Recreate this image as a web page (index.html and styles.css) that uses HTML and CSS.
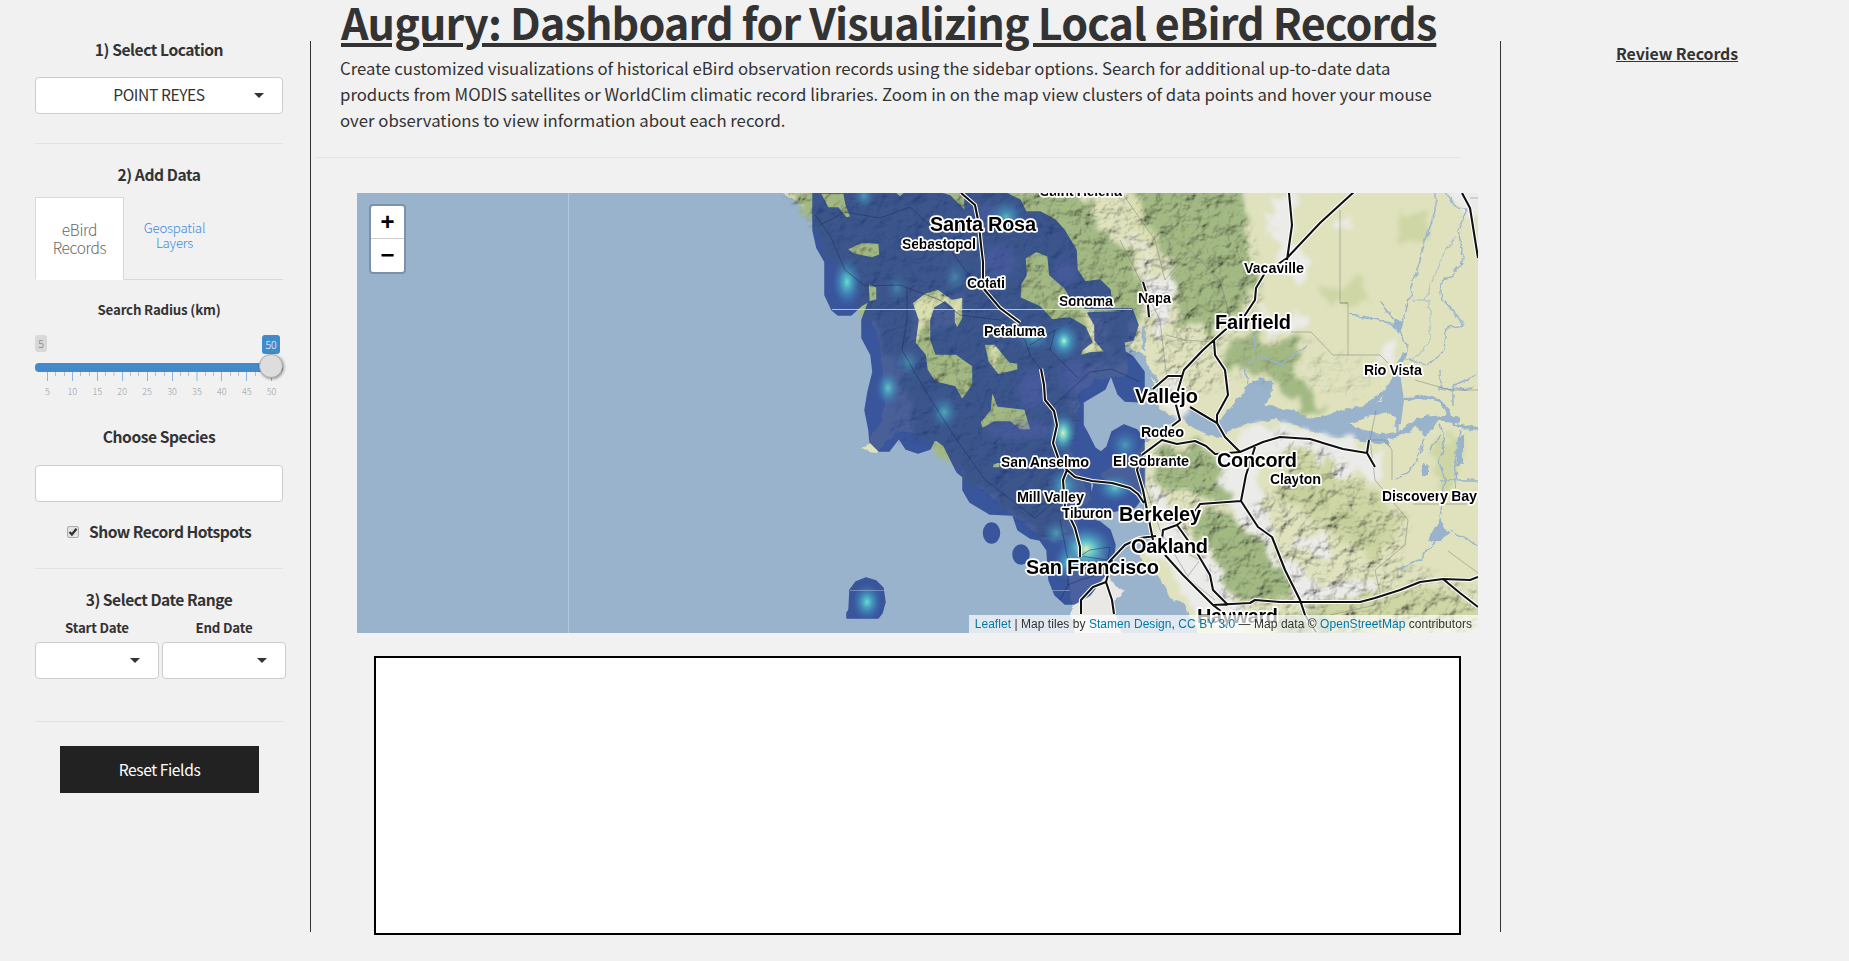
FILE: index.html
```html
<!DOCTYPE html>
<html lang="en">
<head>
<meta charset="utf-8">
<title>Augury</title>
<link rel="stylesheet" href="styles.css">
</head>
<body>
<div class="page">
  <aside class="sidebar">
    <h4 class="heading">1) Select Location</h4>
    <div class="select select-location"><span>POINT REYES</span><i class="caret"></i></div>
    <hr class="rule rule-location">
    <h4 class="heading heading-data">2) Add Data</h4>
    <div class="tabs">
      <div class="tab tab-active">eBird<br>Records</div>
      <div class="tab tab-link">Geospatial<br>Layers</div>
    </div>
    <h5 class="subheading">Search Radius (km)</h5>
    <div class="slider">
      <div class="slider-values"><span class="value-min">5</span><span class="value-current">50</span></div>
      <div class="slider-bar"><i class="knob"></i></div>
      <svg class="ticks" width="248" height="10" viewBox="0 0 248 10">
        <path class="tick-small" d="M20.5 0v4M29.5 0v4M45.5 0v4M54.5 0v4M70.5 0v4M79 0v4M95.5 0v4M103.500 0v4M120.500 0v4M129.500 0v4M145.500 0v4M153.500 0v4M170.500 0v4M178.500 0v4M195.500 0v4M203.500 0v4M220.500 0v4"/>
        <path class="tick-big" d="M12.500 0v9M37.500 0v9M62.500 0v9M87.500 0v9M112.500 0v9M137.500 0v9M162 0v9M186.500 0v9M211.500 0v9M236.500 0v9"/>
      </svg>
      <div class="tick-labels"><span>5</span><span>10</span><span>15</span><span>20</span><span>25</span><span>30</span><span>35</span><span>40</span><span>45</span><span>50</span></div>
    </div>
    <h4 class="heading heading-species">Choose Species</h4>
    <div class="select select-species"></div>
    <div class="check-row">
      <span class="checkbox"><svg width="10" height="10" viewBox="0 0 10 10"><path d="M1.500 5l2.400 2.500L8.500 1.700" fill="none" stroke="#333" stroke-width="2.300"/></svg></span>
      <span class="heading">Show Record Hotspots</span>
    </div>
    <hr class="rule rule-hotspots">
    <h4 class="heading heading-dates">3) Select Date Range</h4>
    <div class="dates">
      <div class="date"><h5 class="subheading">Start Date</h5><div class="select"><i class="caret"></i></div></div>
      <div class="date"><h5 class="subheading">End Date</h5><div class="select"><i class="caret"></i></div></div>
    </div>
    <hr class="rule rule-dates">
    <div class="button">Reset Fields</div>
  </aside>

  <main class="main">
    <h1 class="title">Augury: Dashboard for Visualizing Local eBird Records</h1>
    <p class="intro"><span>Create customized visualizations of historical eBird observation records using the sidebar options. Search for additional up-to-date data</span><span>products from MODIS satellites or WorldClim climatic record libraries. Zoom in on the map view clusters of data points and hover your mouse</span><span>over observations to view information about each record.</span></p>
    <hr class="rule rule-main">
    <div class="map">
      <svg class="map-canvas" width="1121" height="440" viewBox="357 193 1121 440">
        <defs>
          <filter id="soft" x="-20%" y="-20%" width="140%" height="140%"><feGaussianBlur stdDeviation="3.500"/></filter>
          <filter id="rough" x="-10%" y="-10%" width="120%" height="120%">
            <feTurbulence type="fractalNoise" baseFrequency=".045" numOctaves="4" seed="4" result="n"/>
            <feDisplacementMap in="SourceGraphic" in2="n" scale="34" xChannelSelector="R" yChannelSelector="G"/><feGaussianBlur stdDeviation="2"/>
          </filter>
          <filter id="edge" x="-5%" y="-5%" width="110%" height="110%">
            <feTurbulence type="fractalNoise" baseFrequency=".1" numOctaves="3" seed="9" result="n"/>
            <feDisplacementMap in="SourceGraphic" in2="n" scale="7" xChannelSelector="R" yChannelSelector="G"/>
          </filter>
          <filter id="relief" filterUnits="userSpaceOnUse" x="357" y="193" width="1121" height="440">
            <feTurbulence type="fractalNoise" baseFrequency=".06 .065" numOctaves="4" seed="7"/>
            <feColorMatrix values="0 0 0 0 0  0 0 0 0 0  0 0 0 0 0  1 0 0 0 0"/>
            <feDiffuseLighting surfaceScale="8" diffuseConstant="1.2" lighting-color="#fff"><feDistantLight azimuth="225" elevation="50"/></feDiffuseLighting>
          </filter>
          <radialGradient id="glow"><stop offset="0" stop-color="#65dcd2"/><stop offset=".35" stop-color="#49a9c6" stop-opacity=".8"/><stop offset="1" stop-color="#3b6eb4" stop-opacity="0"/></radialGradient>
          <radialGradient id="hot"><stop offset="0" stop-color="#d8efb5"/><stop offset=".3" stop-color="#66d0d0" stop-opacity=".9"/><stop offset="1" stop-color="#3b7cba" stop-opacity="0"/></radialGradient>
          <mask id="hillmask" maskUnits="userSpaceOnUse" x="357" y="193" width="1121" height="440">
            <path filter="url(#soft)" fill="#fff" d="M780 185L830 245L858 287L880 330L900 380L890 440L940 445L1000 505L1050 545L1075 530L1075 450L1085 385L1140 350L1140 310L1170 400L1225 385L1240 330L1260 300L1256 250L1235 185Z
              M1145 455L1190 442L1225 470L1215 500L1240 520L1290 470L1275 430L1330 450L1380 500L1410 520L1395 560L1478 590V640H1270L1220 600L1195 550L1150 500Z"/>
            <path filter="url(#soft)" fill="#555" d="M1210 380L1225 330L1310 340L1380 370L1360 400L1250 380Z"/>
          </mask>
        </defs>
        <rect x="357" y="193" width="1121" height="440" fill="#99b3cd"/>
        <path filter="url(#edge)" fill="#dfe2bd" d="M775 188L813 213L830 245L843 275L858 287L871 292L866 308L876 330L882 360L885 405L880 425L870 440L862 450L877 452L897 432L918 434L938 440L950 452L964 476L990 495L1020 520L1045 540L1072 540L1076 530L1082 505L1092 500L1082 480L1070 450L1076 420L1080 390L1100 378L1128 375L1124 345L1145 355L1152 380L1160 410L1170 416L1190 409L1208 417L1220 420L1246 387L1260 378L1273 382L1271 397L1262 403L1275 408L1293 410L1311 419L1342 410L1380 402L1391 388L1396 370L1405 350L1401 337L1490 337V640H1200L1185 605L1170 597L1158 575L1140 556L1152 545L1150 525L1144 505L1141 490L1110 487L1100 473L1135 455L1143 446L1165 428L1182 418L1200 432L1216 438L1245 423L1275 420L1298 426L1325 436L1355 440L1392 445L1380 433L1396 425L1438 418L1490 402V185Z"/>
        <path fill="#dfe2bd" d="M1380 185H1490V430H1400L1404 400L1398 360Z"/>
        <path filter="url(#edge)" fill="#dfe2bd" d="M1348 424L1385 412L1397 420L1385 436L1365 432Z"/>
        <path filter="url(#edge)" fill="#e9e8e4" d="M1068 555L1074 640H1125L1112 603L1124 591L1111 582L1108 560L1095 548Z"/>
        <g filter="url(#rough)" fill="#a3b984">
          <path d="M785 185L850 290L900 380L925 440L1040 540L1070 520L1075 385L1130 345L1112 280L1070 220L1040 185Z"/>
          <path d="M1025 180L1080 190L1110 235L1135 270L1150 300L1138 330L1100 300L1070 250L1030 210Z"/>
          <path d="M1130 180L1240 185L1256 275L1240 312L1210 335L1180 320L1176 290L1155 240Z"/>
          <path d="M1232 345L1250 335L1290 350L1302 335L1310 360L1295 380L1322 405L1300 408L1270 370L1228 370Z"/>
          <path d="M1155 455L1200 440L1240 480L1230 497L1185 500L1165 485Z"/>
          <path d="M1190 520L1220 512L1255 535L1280 560L1295 600L1245 600L1217 570Z"/>
          <path d="M1260 430L1282 428L1280 443Z"/>
          <path d="M1270 615L1320 612L1370 640H1280Z"/>
          <path d="M1340 510L1370 520L1385 550L1350 540Z" opacity=".65"/>
          <path d="M1285 470L1330 480L1320 515L1290 500Z" opacity=".5"/>
        </g>
        <g filter="url(#rough)" fill="#c9d39e" opacity=".75">
          <path d="M1290 450L1350 470L1400 520L1380 560L1340 540L1280 500Z"/><path d="M1400 210l30 5l-10 25l-25 5z"/><path d="M1320 290l40-10l10 20l-35 10z"/><path d="M1320 600L1440 590L1478 605V633H1330Z"/><path d="M1440 440l20 0l-5 60l-20-10z"/>
        </g>
        <g filter="url(#rough)" fill="#d9dfae">
          <path d="M915 300l45-6l4 25l-34 5l-8 30l-10-10z"/><path d="M1075 310l25 5l12 40l-25-5z"/><path d="M1110 190l25 0l25 50l-10 10z" opacity=".6"/><path d="M985 345l15 4l-6 18z"/>
        </g>
        <g filter="url(#rough)" fill="#ebebe9">
          <path d="M1270 195l20 0l5 45l18 15l-15 30l-20-20l-12-35z"/><path d="M1147 275l22-5l5 20l-10 50l-12-5z"/><path d="M1255 310l50 5l-5 20l-40-5z"/><path d="M1165 375l25 5l4 30l-22 8l-18-28z"/><path d="M1240 430l40-5l70 15l35 12v25l-30-5l-65-22l-25 5l-5 45l20 35l-25 5l-30-40l-5-35z"/><path d="M1140 455l10 20l20 30l20 35l30 30l25 45l-15 30l-35-35l-30-45l-20-10l15-30z"/><path d="M1250 535l30 30l20 35l70-5l-3-15l-45 5l-30-15l-25-35z"/><path d="M1335 212h12v18h-10z"/><path d="M1447 188h35v18l-25 3z"/><path d="M1295 535l30 5l5 15l-30-5z"/><path d="M1132 225l10 20l12 30l-6 10l-17-45z" opacity=".5"/><path d="M1380 350l13 3l3 14l-15-5z"/>
        </g>
        <g mask="url(#hillmask)" class="relief"><rect x="357" y="193" width="1121" height="440" filter="url(#relief)"/></g>
        <path fill="#99b3cd" filter="url(#edge)" d="M1438 419l-12 18l-14-14zM1440 518l10 16l-8 7h-14zM1395 318l8 5l-3 12l-8-10zM1424 463l5 5v7h-7zM1458 440l6-8v30l-8 5z"/>
        <g class="rivers" filter="url(#edge)">
          <path d="M1435 193V210L1411 290L1401 330L1407 350L1401 368" stroke-width="1.300"/>
          <path d="M1404 352L1399 368L1392 387L1365 408L1345 416" stroke-width="5.500"/>
          <path d="M1397 432L1397 402L1425 396L1438 400L1448 410L1454 425L1478 430" stroke-width="3.200"/>
          <path d="M1345 425L1380 438L1405 432L1420 420L1438 418L1460 420" stroke-width="5"/>
          <path d="M1447 193L1455 207L1468 208L1458 230L1463 255L1460 267L1440 285L1442 300L1465 325L1447 328L1444 350L1427 366L1405 358" stroke-width="1.300"/>
          <path d="M1350 315L1378 320L1398 326M1380 302L1398 322M1250 395L1245 365L1260 355L1280 365L1308 345M1256 335V350" stroke-width="1.500"/>
          <path d="M1440 425L1445 440L1438 460L1445 480L1440 518M1460 430L1455 460L1458 495M1440 535L1420 560L1400 570M1450 530L1478 545M1425 440L1410 470L1395 480M1440 480H1478M1440 370L1440 390L1475 388M1453 405V385L1478 375M1440 435L1430 450" stroke-width="1.400"/>
          <path d="M1138 355L1150 372L1160 385L1155 400M1145 325L1143 350" stroke-width="3"/>
          <path d="M1425 300L1440 262L1455 235M1412 300H1430V345L1410 360" stroke-width=".8"/>
        </g>
        <g class="tracks"><path d="M1340 210V303H1348V355M1340 303H1348M1291 332H1311L1333 355H1380L1400 375M1415 380L1450 390H1478M1166 335L1185 340L1210 342M1120 240L1140 280L1160 320L1167 380M1120 190L1155 240L1165 280L1190 250L1220 280L1232 325M1376 410L1370 440L1375 480L1408 520L1405 545L1375 570L1380 593M1413 504H1467M1448 551L1478 573M1330 615L1375 605L1380 593M1145 450V485L1160 530L1190 580L1215 600M1170 545L1200 560L1185 580M1370 440H1385L1392 450V480M1470 198H1478"/></g>

        <g class="heat">
          <path fill-rule="evenodd" d="M813 193V230L817 248L825 262V295L832 310L838 315H851L862 305L869 301L862 320V338L871 355L873 372L868 392L865 410L869 430L870 442L879 451L889 451L899 438L906 449L918 453L930 449L935 439L944 446L957 472L963 477V490L970 502L990 514L1013 515L1018 530L1030 538L1040 540L1047 550L1049 580L1055 595L1065 604H1074L1090 595L1105 575L1113 560L1115 545L1110 530L1100 522L1085 518L1088 510L1110 512L1135 507L1144 495V440L1137 430L1124 425L1112 432L1107 447L1101 452L1095 448L1088 434L1083 425V402L1105 389L1111 375L1118 394L1125 401L1144 402V372L1133 357L1125 352L1124 342L1133 340L1138 325L1132 309H1112L1110 290L1100 280L1085 282L1077 270L1076 250L1064 230L1055 220L1040 212H1026L1020 200L1005 193H965V211L950 196L940 193H905L900 197L895 193ZM820 193H844L846 204L851 217L846 218L838 208L828 208Z
          M847 249L862 242L879 243L880 255L872 258L853 254ZM868 283L877 287V300L869 302ZM912 303L925 293L938 289L952 299L963 297V318L957 329L954 322V310L945 302L935 308L931 320V340L936 354L956 354L973 366V385L962 400L955 387L935 382L927 370L925 355L915 343L918 320ZM984 344H995L1010 362L1018 363V370L998 375L988 362ZM992 390L998 406L1025 409L1031 430H1020L1010 422H995L982 429L980 422L990 410ZM1025 258L1036 251L1048 256L1050 275L1065 288L1070 297L1085 308L1120 310V312L1088 313L1095 325V340L1105 352L1090 353L1080 356L1082 350L1092 342L1085 327L1070 318L1052 320L1040 307L1020 298V285L1026 275ZM993 464L1000 461V468H992ZM1090 477L1094 485L1091 497Z"/>
          <ellipse cx="991.500" cy="533" rx="8" ry="10"/><ellipse cx="1021" cy="554.500" rx="8" ry="9.500"/>
          <path d="M847 618V613L849 610L850 590L856 582L866 578L876 581L883 588L885 602L882 613L878 618Z"/>
        </g>
        <g>
          <ellipse cx="847" cy="282" rx="15" ry="25" fill="url(#glow)"/><ellipse cx="1064" cy="341" rx="17" ry="20" fill="url(#glow)"/><ellipse cx="1064" cy="341" rx="8" ry="10" fill="url(#hot)"/>
          <ellipse cx="888" cy="388" rx="13" ry="18" fill="url(#glow)" opacity=".8"/><ellipse cx="908" cy="362" rx="14" ry="16" fill="url(#glow)" opacity=".4"/><ellipse cx="944" cy="412" rx="15" ry="18" fill="url(#glow)" opacity=".6"/>
          <ellipse cx="1063" cy="433" rx="14" ry="21" fill="url(#hot)"/><ellipse cx="1006" cy="217" rx="20" ry="18" fill="url(#glow)" opacity=".7"/><ellipse cx="955" cy="277" rx="13" ry="18" fill="url(#glow)" opacity=".35"/>
          <ellipse cx="897" cy="288" rx="12" ry="15" fill="url(#glow)" opacity=".35"/><ellipse cx="1034" cy="337" rx="20" ry="15" fill="url(#glow)" opacity=".6"/><ellipse cx="864" cy="196" rx="12" ry="14" fill="url(#glow)" opacity=".5"/>
          <ellipse cx="1115" cy="488" rx="20" ry="15" fill="url(#glow)" opacity=".8"/><ellipse cx="1064" cy="486" rx="18" ry="20" fill="url(#glow)" opacity=".7"/><ellipse cx="1125" cy="445" rx="17" ry="18" fill="url(#glow)" opacity=".5"/>
          <ellipse cx="1086" cy="549" rx="28" ry="24" fill="url(#hot)"/><ellipse cx="1056" cy="533" rx="14" ry="14" fill="url(#glow)" opacity=".5"/><ellipse cx="867" cy="602" rx="15" ry="19" fill="url(#glow)"/><ellipse cx="1067" cy="563" rx="15" ry="18" fill="url(#glow)" opacity=".7"/>
          <g fill="#5c64b8" opacity=".35" filter="url(#soft)"><circle cx="1000" cy="262" r="16"/><ellipse cx="1032" cy="390" rx="14" ry="20"/><circle cx="1065" cy="272" r="11"/><circle cx="988" cy="213" r="9"/><ellipse cx="1020" cy="430" rx="35" ry="9"/><circle cx="1075" cy="375" r="17"/></g>
        </g>
        <g class="tracks heat-tracks"><path d="M815 215L830 235L845 270L865 286L900 285L940 300L960 315L1000 320L1025 340L1030 355L1041 370M820 225L845 212L880 218L910 207L940 235L965 270L983 288M907 288V320L902 350L925 390L950 430L985 480L1035 518L1050 505L1070 495M1030 345L1055 330L1050 350L1078 378M1052 407L1090 372L1112 369L1140 382M1060 520L1068 560V585L1060 600M1068 585L1080 580L1106 572M1090 550L1110 547L1108 560L1080 556Z"/></g>
        <path d="M568.500 193V633" stroke="#b2c9df" stroke-width="1"/>
        <path d="M832 309.500H1132" stroke="#d7dfcf" opacity=".8"/><path d="M850 590.500H884M1050 590.500H1070" stroke="#8fa5c9" opacity=".7"/>
        <defs><path id="roads" d="M961 193L975 205L979 225L981 245L983 262V288L1000 308L1020 323M1041 369L1044 385L1045 400L1054 411L1057 425L1053 443L1059 460L1067 470L1063 480L1065 507L1075 528L1080 547V557M1067 470L1075 477L1092 481L1112 483L1130 488L1138 494L1144 503M1140 458L1137 470L1143 490L1149 520L1153 540M1142 455L1162 440L1177 444L1195 441L1206 446L1215 454L1240 452L1263 442L1280 437L1310 439L1343 449L1367 453L1375 467M1367 453L1369 440M1255 447L1246 475L1241 501L1258 527L1272 537L1285 570L1300 600L1305 615L1316 632M1241 501L1200 504L1196 510L1177 525L1163 530L1162 540M1177 525L1197 553L1210 575L1213 590L1228 605M1165 555L1183 575L1213 605L1222 612M1213 605L1250 603L1255 600L1280 602H1360L1375 598L1400 590L1420 582L1443 579L1470 580L1478 577M1443 579L1460 593L1478 607M1172 426L1180 420L1176 405L1178 390L1184 370L1203 350L1225 330L1245 315L1255 300L1256 288L1265 273L1287 258L1320 223L1355 191M1287 260L1292 225L1289 193M1214 340L1215 355L1225 370L1228 395L1217 415L1217 423L1225 437L1240 452M1462 193L1470 208L1478 258M1153 389L1168 376L1182 376M1190 407L1200 413L1217 423M1143 282L1147 295L1149 317M1108 563L1125 545L1140 538L1156 536M1112 560L1106 582L1093 587L1081 600V614M1106 582L1112 600L1114 614"/></defs>
        <use href="#roads" class="road-case"/>
        <use href="#roads" class="road"/>
        <g class="places">
          <text x="1040" y="196" textLength="82">Saint Helena</text><text x="902" y="249" textLength="74">Sebastopol</text><text x="967" y="288" textLength="38">Cotati</text><text x="1059" y="305.500" textLength="54">Sonoma</text><text x="984" y="335.500" textLength="61">Petaluma</text><text x="1138" y="303" textLength="33">Napa</text><text x="1244" y="272.500" textLength="60">Vacaville</text><text x="1364" y="374.500" textLength="58">Rio Vista</text><text x="1141" y="437" textLength="43">Rodeo</text><text x="1113" y="465.500" textLength="76">El Sobrante</text><text x="1270" y="484" textLength="51">Clayton</text><text x="1382" y="500.500" textLength="95">Discovery Bay</text><text x="1001" y="467" textLength="88">San Anselmo</text><text x="1017" y="502" textLength="67">Mill Valley</text><text x="1062" y="518" textLength="50">Tiburon</text>
        </g>
        <g class="places cities">
          <text x="930" y="231" textLength="106">Santa Rosa</text><text x="1215" y="329" textLength="76">Fairfield</text><text x="1135" y="403" textLength="63">Vallejo</text><text x="1217" y="467" textLength="80">Concord</text><text x="1119" y="521" textLength="82">Berkeley</text><text x="1131" y="553" textLength="77">Oakland</text><text x="1026" y="574" textLength="133">San Francisco</text><text x="1197" y="623" textLength="81">Hayward</text>
        </g>
      </svg>
      <div class="zoom-control"><span>+</span><span>−</span></div>
      <div class="attribution"><a>Leaflet</a> | Map tiles by <a>Stamen Design</a>, <a>CC BY 3.0</a> — Map data © <a>OpenStreetMap</a> contributors</div>
    </div>
    <div class="plot"></div>
  </main>

  <aside class="review"><h4 class="heading review-title">Review Records</h4></aside>
</div>
</body>
</html>
```
FILE: styles.css
```css
* { box-sizing: border-box; }
body { margin: 0; background: #f1f1f1; color: #333; font-family: "Noto Sans CJK SC", "Noto Sans", sans-serif; overflow: hidden; }
h1, h4, h5, p, hr { margin: 0; }
.page { display: flex; height: 961px; align-items: flex-start; }
.sidebar { flex: none; width: 311px; height: 891px; margin-top: 41px; padding: 0 27px 0 35px; border-right: 1px solid #333; }
.heading { height: 20px; font-size: 15.600px; line-height: 20px; font-weight: 700; letter-spacing: -.430px; text-align: center; white-space: nowrap; }
.sidebar > .heading:first-child { margin-top: -2px; }
.subheading { height: 18px; font-size: 13.300px; line-height: 18px; font-weight: 700; letter-spacing: -.180px; text-align: center; }
.select { position: relative; height: 37px; border: 1px solid #ccc; border-radius: 4px; background: #fff; font-size: 15.600px; line-height: 33px; letter-spacing: -.400px; text-align: center; }
.select-location { margin-top: 18px; }
.caret { position: absolute; right: 18px; top: 15px; border: 5.500px solid transparent; border-top-color: #333; border-bottom: 0; }
.rule { height: 1px; border: 0; background: #e3e3e3; }
.rule-location { margin-top: 29px; }
.heading-data { margin-top: 20px; }
.tabs { display: flex; margin-top: 13px; height: 83px; font-weight: 300; text-align: center; box-shadow: inset 0 -1px #d8d8d8; }
.tab-active { width: 89px; padding-top: 22px; font-size: 15.500px; line-height: 18px; letter-spacing: -.350px; color: #666; background: #fff; border: 1px solid #d8d8d8; border-bottom-color: #fff; }
.tab-link { width: 101px; padding-top: 23px; font-size: 13.300px; line-height: 15px; letter-spacing: -.250px; color: #428bdc; }
.tabs + .subheading { margin-top: 21px; }
.slider { height: 85px; padding-top: 16px; }
.slider-values { display: flex; justify-content: space-between; height: 28px; font-weight: 300; padding-right: 3px; }
.value-min { width: 12px; height: 17px; border-radius: 3px; background: #d8d8d8; color: #777; font-size: 10.500px; line-height: 17px; text-align: center; }
.value-current { width: 18px; height: 19px; border-radius: 3px; background: #428bca; color: #fff; font-size: 10.500px; line-height: 19px; text-align: center; }
.slider-bar { position: relative; height: 9px; border-radius: 4px; background: #428bca; }
.knob { position: absolute; z-index: 1; right: 0; top: -9px; width: 24px; height: 24px; border: 1px solid #aaa; border-radius: 50%; background: #ddd; box-shadow: 1px 1px 3px rgba(0, 0, 0, .4); }
.ticks { display: block; }
.tick-small { stroke: #bbb; }
.tick-big { stroke: #8bb7de; }
.tick-labels { display: flex; width: 249px; font-size: 9px; line-height: 12px; height: 12px; margin-top: 4px; font-weight: 300; color: #999fa5; }
.tick-labels span { flex: 1; text-align: center; }
.heading-species { margin-top: 22px; }
.select-species { margin-top: 19px; }
.check-row { display: flex; align-items: center; height: 20px; margin-top: 20px; padding-left: 32px; gap: 10px; }
.check-row .heading { margin-top: -2px; letter-spacing: -.500px; }
.checkbox { width: 12px; height: 12px; display: flex; align-items: center; justify-content: center; border: 1px solid #aaa; border-radius: 2px; background: #e3e3e3; }
.rule-hotspots { margin-top: 26px; }
.heading-dates { margin-top: 20px; letter-spacing: -.480px; }
.dates { display: flex; width: 251px; gap: 3px; margin-top: 10px; }
.date { width: 124px; }
.date .select { margin-top: 5px; }
.rule-dates { margin-top: 42px; }
.button { width: 199px; height: 47px; margin: 24px 0 0 25px; background: #222; color: #fff; font-size: 15.600px; line-height: 46px; letter-spacing: -.400px; text-align: center; }
.main { flex: none; width: 1189px; padding-left: 5px; }
.title { margin: 0 0 0 25px; height: 42px; font-size: 43px; line-height: 42px; letter-spacing: -.830px; white-space: nowrap; text-decoration: underline; text-decoration-thickness: 4px; text-underline-offset: 3px; }
.intro { margin: 13px 0 0 24px; font-size: 16.740px; line-height: 26px; height: 102px; }
.intro span { display: block; white-space: nowrap; }
.rule-main { width: 1145px; }
.map { position: relative; width: 1121px; height: 440px; margin: 35px 0 0 41px; overflow: hidden; }
.map-canvas { display: block; }
.relief { mix-blend-mode: multiply; opacity: .5; }
.rivers { fill: none; stroke: #99b3cd; }
.tracks { fill: none; stroke: #777; stroke-width: .700; opacity: .65; }
.heat-tracks { stroke: #172c50; opacity: .7; }
.heat { fill: #203c8e; stroke: #203c8e; stroke-width: 1.500; stroke-linejoin: round; opacity: .79; }
.road, .road-case { fill: none; stroke-linejoin: round; }
.road { stroke: #111; stroke-width: 2.100; }
.road-case { stroke: #fff; stroke-width: 4.200; }
.places { font: bold 14.500px "Liberation Sans", Arial, sans-serif; fill: #000; stroke: #fff; stroke-width: 3.500px; stroke-linejoin: round; paint-order: stroke; }
.cities { font-size: 20px; }
.zoom-control { position: absolute; left: 12px; top: 11px; width: 37px; height: 70px; border: 2px solid #7d91a7; border-radius: 4px; background: #fff; display: flex; flex-direction: column; font: bold 24px/32px "Liberation Sans", Arial, sans-serif; color: #000; text-align: center; }
.zoom-control span { height: 33px; }
.zoom-control span:first-child { border-bottom: 1px solid #ccc; }
.attribution { position: absolute; right: 0; bottom: 0; height: 18px; padding: 0 6px; background: rgba(255, 255, 255, .7); color: #333; font: 12px/18px "Liberation Sans", Arial, sans-serif; letter-spacing: .045px; white-space: nowrap; }
.attribution a { color: #0078a8; }
.plot { width: 1087px; height: 279px; margin: 23px 0 0 58px; border: 2px solid #000; background: #fff; }
.review { flex: 1; height: 891px; margin-top: 41px; border-left: 1px solid #333; padding: 3px 0 0 4px; }
.review-title { font-size: 15.900px; letter-spacing: -.050px; text-decoration: underline; text-decoration-thickness: 1px; text-underline-offset: 1px; }
```
